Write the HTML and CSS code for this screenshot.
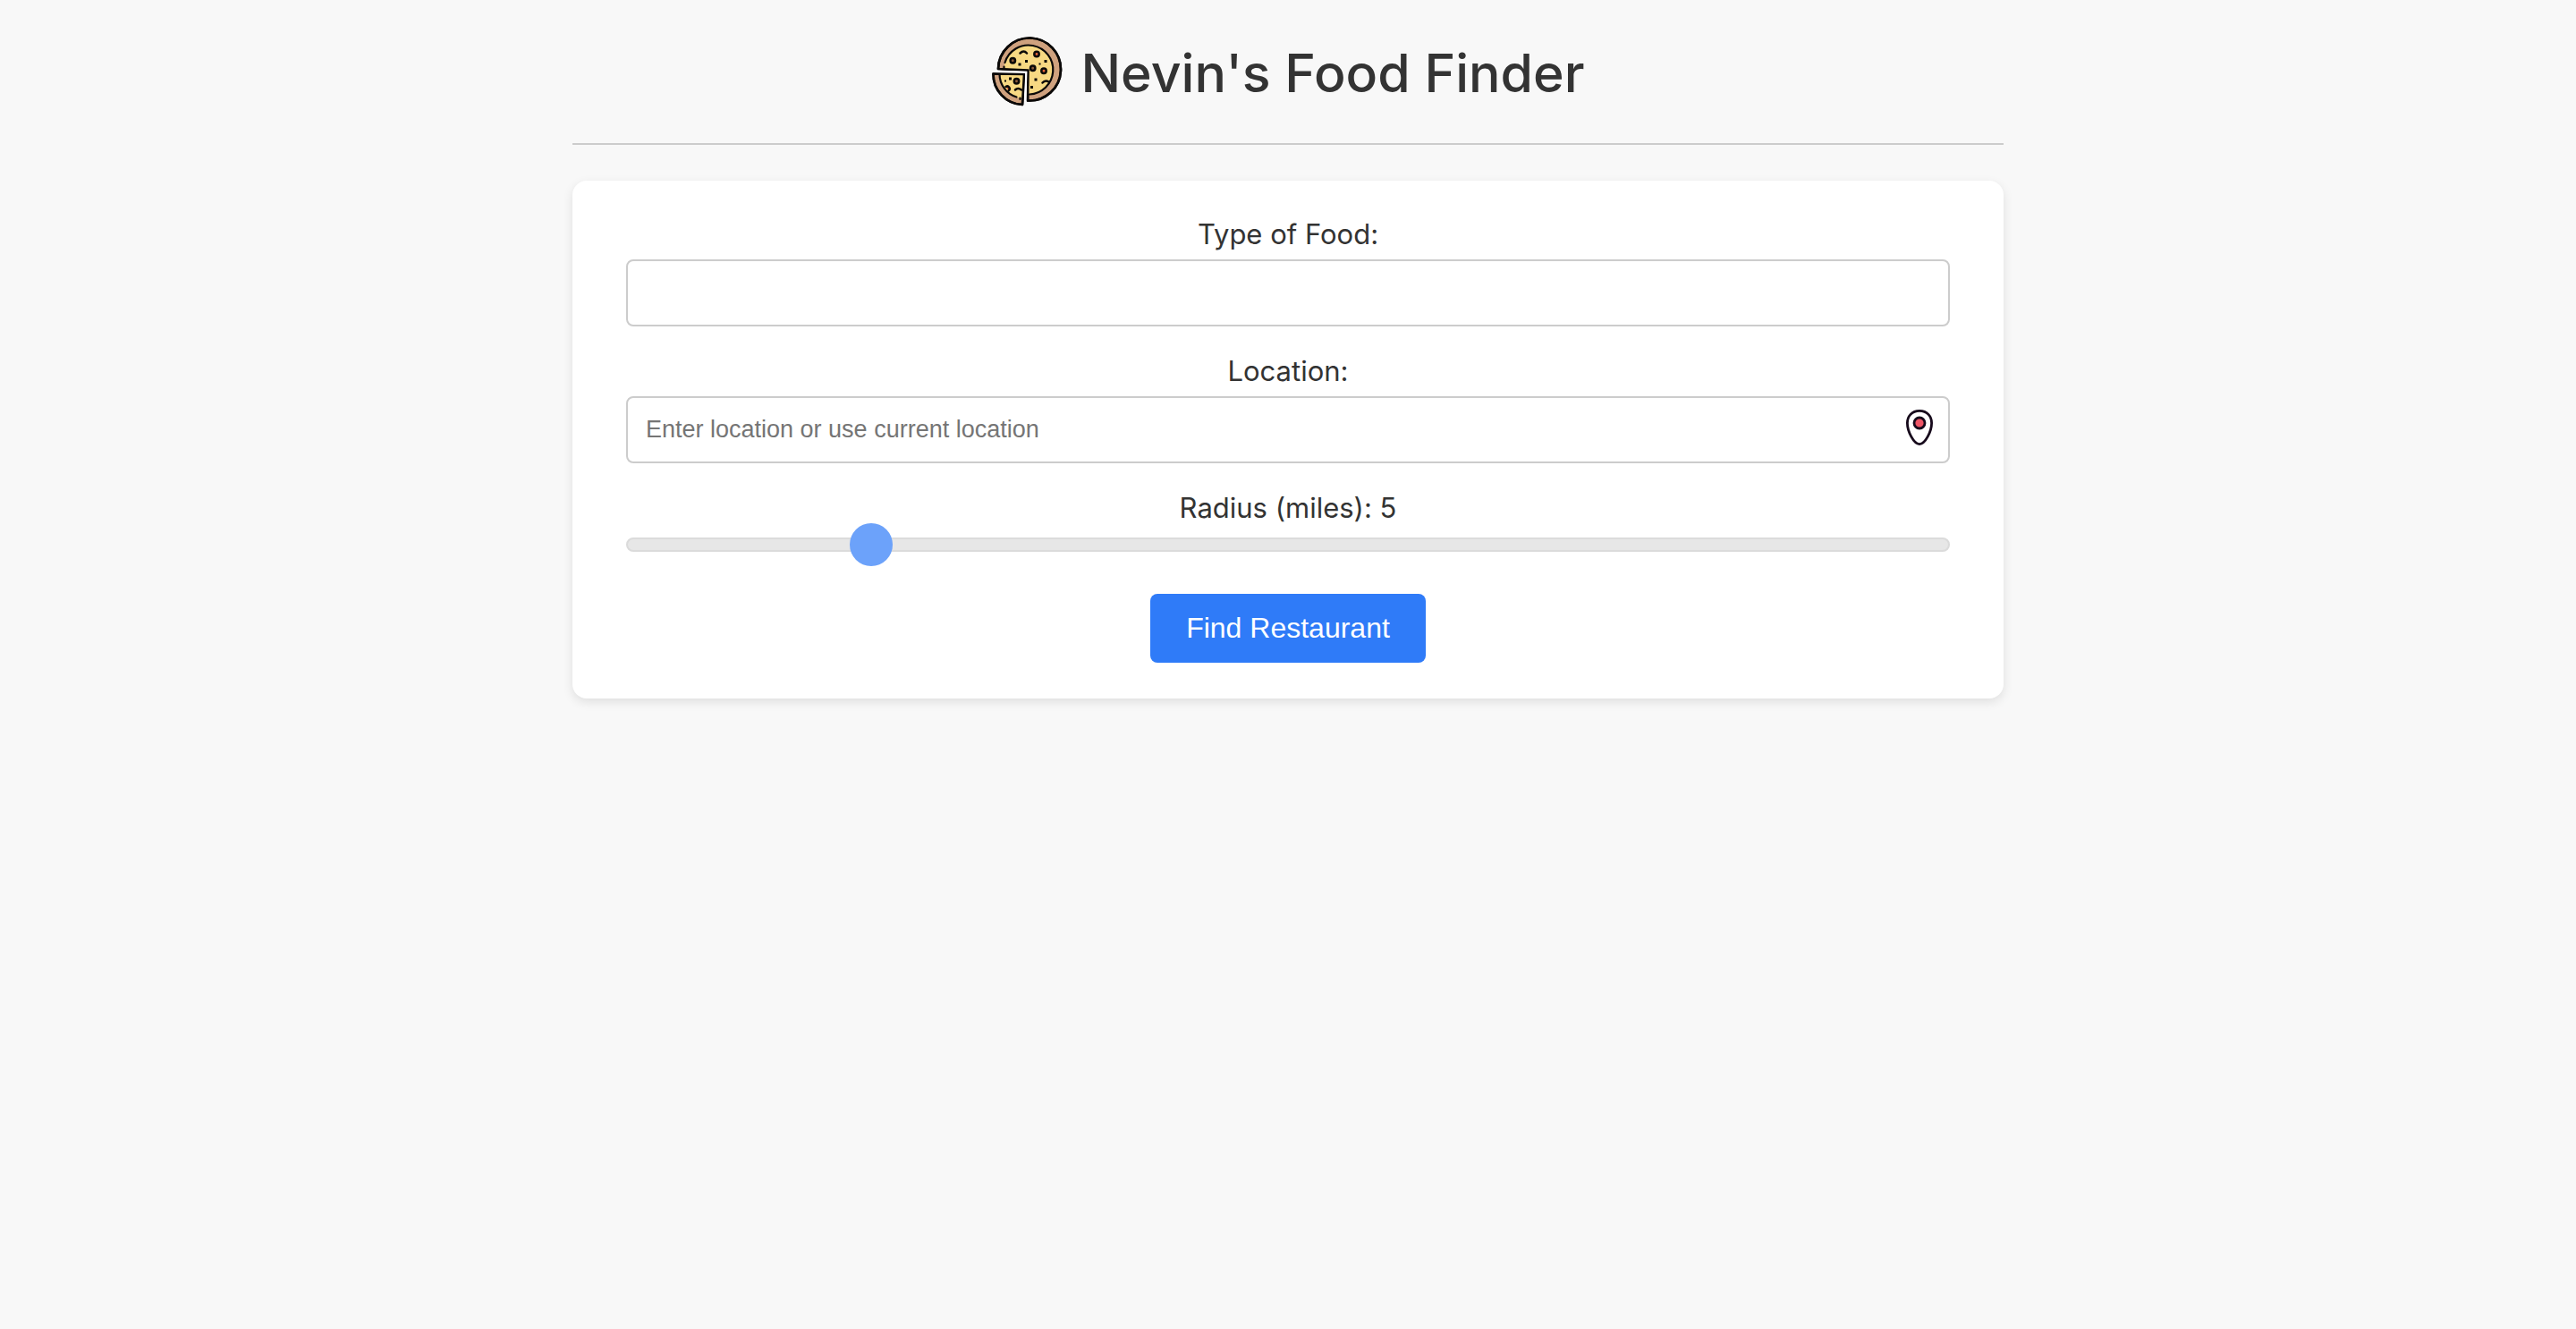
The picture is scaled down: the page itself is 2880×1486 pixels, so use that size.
FILE: index.html
```html
<!DOCTYPE html>
<html lang="en">
<head>
  <meta charset="utf-8">
  <meta name="viewport" content="width=device-width, initial-scale=1">
  <title>Nevin's Food Finder</title>
  <link rel="stylesheet" href="styles.css">
</head>
<body>
  <div class="container">
    <header class="header">
      <svg class="logo" viewBox="0 0 80 80" aria-hidden="true">
        <g stroke="#0b0908" stroke-width="2.6" stroke-linejoin="round" stroke-linecap="round">
          <path fill="#cfa17e" d="M8 36A35 35 0 1 1 41 71.500L41.500 37.500Z"/>
          <path fill="#f7d983" stroke="none" d="M14.500 35.500A27.500 27.500 0 1 1 41.500 64.500V37.500Z"/>
          <path fill="none" stroke-width="2.200" d="M15.500 29A27.500 27.500 0 1 1 43 64.500M14.500 33.500V35"/>
          <path fill="none" d="M8 36A35 35 0 1 1 41 71.500L41.500 37.500Z"/>
          <path fill="#cfa17e" d="M2.500 41.500L37 42L35 76A34 34 0 0 1 2.500 41.500Z"/>
          <path fill="#f7d983" stroke="none" d="M9.500 42L37 42L34.500 69A27 27 0 0 1 9.500 42Z"/>
          <path fill="none" stroke-width="2.200" d="M9.500 42A27 27 0 0 0 28.500 67.500M32.500 68.500V70"/>
          <path fill="none" d="M2.500 41.500L37 42L35 76A34 34 0 0 1 2.500 41.500Z"/>
          <g fill="#e2643b" stroke-width="2.500">
            <circle cx="51" cy="19.500" r="2.700"/>
            <circle cx="59" cy="38.300" r="2.700"/>
            <circle cx="24.300" cy="26.800" r="2.700" fill="#8b5b3b"/>
            <circle cx="46.700" cy="35.300" r="2.700" fill="#8b5b3b"/>
            <circle cx="28.500" cy="49.800" r="2.700" fill="#8b5b3b"/>
            <path d="M16.500 56A2.700 2.700 0 1 1 19.500 60.500"/>
          </g>
          <path fill="none" stroke-width="2.500" d="M32.500 18.500Q36.500 14.500 40 18.500M57.500 51.500Q60.500 48 64.500 50.500M27 59.500Q30 56.500 34 59.500"/>
        </g>
        <path fill="#0b0908" d="M38 26h3v3h-3zM30.500 29.500h3v3h-3zM59.500 26h3v3h-3zM53.500 29.500h2v2h-2zM48.500 46.500h3v3h-3zM44 55h3v3h-3zM20 45.500h3v3h-3zM15 48.500h2v2h-2z"/>
        <path fill="none" stroke="#fff" stroke-width="2.200" d="M4 38.800L39.300 39.700L38.300 72"/>
      </svg>
      <h1 class="title">Nevin's Food Finder</h1>
    </header>

    <form class="card">
      <div class="field">
        <label class="label" for="food">Type of Food:</label>
        <input class="input" id="food" type="text">
      </div>
      <div class="field">
        <label class="label" for="location">Location:</label>
        <div class="input-wrap">
          <input class="input" id="location" type="text" placeholder="Enter location or use current location">
          <button class="locate" type="button" aria-label="Use current location">
            <svg class="pin" viewBox="0 0 40 40" aria-hidden="true">
              <path fill="#fff" stroke="#170a1c" stroke-width="2.800" d="M20 1.400C11.500 1.400 6.400 7.500 6.400 15C6.400 24 13.500 38.600 20 38.600S33.600 24 33.600 15C33.600 7.500 28.500 1.400 20 1.400Z"/>
              <circle cx="20" cy="15" r="6" fill="#ee5566" stroke="#170a1c" stroke-width="2.800"/>
            </svg>
          </button>
        </div>
      </div>
      <div class="field">
        <label class="label" for="radius">Radius (miles): 5</label>
        <input class="slider" id="radius" type="range" min="1" max="24" value="5">
      </div>
      <button class="submit" type="submit">Find Restaurant</button>
    </form>
  </div>
</body>
</html>
```

FILE: styles.css
```css
* {
  box-sizing: border-box;
}

body {
  margin: 0;
  background: #f8f8f8;
  color: #333;
  font-family: Inter, "Liberation Sans", sans-serif;
  font-size: 31px;
  line-height: 40px;
}

.container {
  max-width: 1600px;
  margin: 0 auto;
  padding-bottom: 40px;
}

.header {
  display: flex;
  align-items: center;
  justify-content: center;
  gap: 20px;
  padding: 40px 0 38px;
  border-bottom: 2px solid #ccc;
}

.logo {
  width: 80px;
  height: 80px;
}

.title {
  margin: 0;
  padding-top: 2px;
  font-size: 59px;
  font-weight: 500;
  line-height: 80px;
}

.card {
  display: flex;
  flex-direction: column;
  align-items: center;
  gap: 30px;
  margin-top: 40px;
  padding: 40px 60px;
  border-radius: 16px;
  background: #fff;
  box-shadow: 0 4px 12px rgba(0, 0, 0, 0.1);
}

.field {
  display: flex;
  flex-direction: column;
  gap: 8px;
  width: 100%;
}

.label {
  text-align: center;
}

.input-wrap {
  position: relative;
}

.input {
  display: block;
  width: 100%;
  height: 75px;
  padding: 20px;
  border: 2px solid #ccc;
  border-radius: 8px;
  background: #fff;
  color: #333;
  font-family: "Liberation Sans", Arial, sans-serif;
  font-size: 27px;
}

.input::placeholder {
  color: #757575;
}

.locate {
  position: absolute;
  top: 15px;
  right: 14px;
  padding: 0;
  border: 0;
  background: none;
  cursor: pointer;
}

.pin {
  display: block;
  width: 40px;
  height: 40px;
}

.slider {
  width: 100%;
  height: 16px;
  margin: 5px 0 17px;
  appearance: none;
  border: 2px solid #ccc;
  border-radius: 8px;
  background: #ddd;
  opacity: 0.7;
}

.slider::-webkit-slider-thumb {
  width: 48px;
  height: 48px;
  appearance: none;
  border-radius: 50%;
  background: #2f7bf8;
  cursor: pointer;
}

.submit {
  padding: 20px 40px;
  border: 0;
  border-radius: 8px;
  background: #2f7bf8;
  color: #fff;
  font-family: "Liberation Sans", Arial, sans-serif;
  font-size: 32px;
  line-height: 37px;
  cursor: pointer;
}
```
